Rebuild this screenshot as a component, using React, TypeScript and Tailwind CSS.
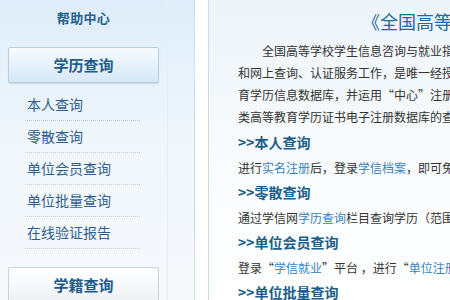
const sideLinks = ["本人查询", "零散查询", "单位会员查询", "单位批量查询", "在线验证报告"];

const App: React.FC = () => {
    return (
        <div
            className="flex w-[450px] h-[300px] overflow-hidden bg-white"
            style={{ fontFamily: '"Noto Sans CJK SC", "Noto Sans", sans-serif' }}
        >
            {/* left sidebar */}
            <aside className="w-[195px] shrink-0 border-r border-[#cddfec] bg-gradient-to-b from-[#deedf9] via-[#f1f7fc] to-[#f6f9fc]">
                <div className="w-[168px] border-r border-[#e4eef6] h-full">
                    <div className="h-[40px] flex items-center justify-center pb-1">
                        <span className="text-[13px] font-bold text-[#23608c] tracking-wide">
                            帮助中心
                        </span>
                    </div>
                    <div className="mx-2 mt-[7px] h-[36px] flex items-center justify-center border border-[#b8cfe1] rounded-[2px] bg-gradient-to-b from-[#f7fbfe] to-[#d6e8f6] shadow-[0_1px_1px_rgba(150,180,200,0.4)]">
                        <span className="text-[15px] font-bold text-[#1d5b8c]">
                            学历查询
                        </span>
                    </div>
                    <ul className="ml-[25px] w-[115px] mt-[6px]">
                        {sideLinks.map((name) => (
                            <li
                                key={name}
                                className="h-[32px] flex items-center pl-[2px] border-b border-dotted border-[#c4ccd4] text-[14px] text-[#2f5f8e]"
                            >
                                {name}
                            </li>
                        ))}
                    </ul>
                    <div className="mx-2 mt-[18px] h-[36px] flex items-center justify-center border border-[#c9d3dc] rounded-[2px] bg-gradient-to-b from-white to-[#eef1f4]">
                        <span className="text-[15px] font-bold text-[#1d5b8c]">
                            学籍查询
                        </span>
                    </div>
                </div>
            </aside>

            <div className="w-[13px] shrink-0 bg-white" />

            {/* main content */}
            <main className="flex-1 min-w-0 border-l border-[#c9dcea] bg-gradient-to-b from-[#edf4fa] via-[#f8fbfd] to-white pl-[29px] whitespace-nowrap text-[12px] text-[#333]">
                <div className="h-[40px] flex items-center pl-[124px] pt-[2px]">
                    <span className="text-[18px] text-[#1e6a9c]">
                        《全国高等教育学历查询服务说明》
                    </span>
                </div>
                <div className="leading-[22px]">
                    <p className="pl-[24px]">全国高等学校学生信息咨询与就业指导中心（简称“中心”）</p>
                    <p>和网上查询、认证服务工作，是唯一经授权的高等教育学历</p>
                    <p>育学历信息数据库，并运用“中心”注册的学历证书电子</p>
                    <p>类高等教育学历证书电子注册数据库的查询服务。</p>
                </div>
                <div className="mt-[2px] leading-[25px]">
                    <h3 className="text-[14px] font-bold text-[#1b5e8b]">&gt;&gt;本人查询</h3>
                    <p>
                        进行<span className="text-[#3784b9]">实名注册</span>后，登录
                        <span className="text-[#3784b9]">学信档案</span>，即可免费查询
                    </p>
                    <h3 className="text-[14px] font-bold text-[#1b5e8b]">&gt;&gt;零散查询</h3>
                    <p>
                        通过学信网<span className="text-[#3784b9]">学历查询</span>栏目查询学历（范围
                    </p>
                    <h3 className="text-[14px] font-bold text-[#1b5e8b]">&gt;&gt;单位会员查询</h3>
                    <p>
                        登录“<span className="text-[#3784b9]">学信就业</span>”平台 ，进行“
                        <span className="text-[#3784b9]">单位注册</span>”
                    </p>
                    <h3 className="text-[14px] font-bold text-[#1b5e8b]">&gt;&gt;单位批量查询</h3>
                </div>
            </main>
        </div>
    );
};

export default App;
